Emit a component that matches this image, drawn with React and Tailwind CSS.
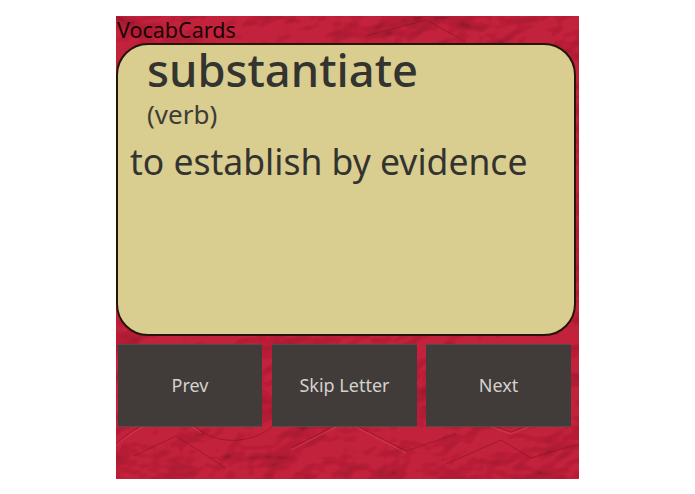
import React from "react";

const font = { fontFamily: '"Noto Sans", "Open Sans", sans-serif' };

function Paper() {
  return (
    <svg className="absolute inset-0 w-full h-full" viewBox="0 0 463 463" preserveAspectRatio="none" aria-hidden="true">
      <defs>
        <filter id="crumple" x="0" y="0" width="100%" height="100%">
          <feTurbulence type="fractalNoise" baseFrequency="0.013 0.018" numOctaves="4" seed="7" result="n" />
          <feDiffuseLighting in="n" surfaceScale="9" lightingColor="#ffffff" diffuseConstant="1.12" result="l">
            <feDistantLight azimuth="235" elevation="60" />
          </feDiffuseLighting>
          <feComposite in="l" in2="SourceGraphic" operator="arithmetic" k1="1" k2="0" k3="0" k4="0" />
        </filter>
      </defs>
      <rect width="463" height="463" fill="#c2203a" filter="url(#crumple)" />
      <g fill="none" stroke="#85121f" strokeWidth="1" opacity="0.55">
        <path d="M0 428 C30 400 60 395 85 415 C110 432 150 425 165 400" />
        <path d="M18 440 L60 420 L110 452" />
        <path d="M175 432 L230 404 L290 435 L340 418" />
        <path d="M330 448 L385 424 L415 442 L463 428" />
        <path d="M345 398 L395 416 L440 398" />
        <path d="M250 20 L310 4 L350 26" />
      </g>
      <g fill="none" stroke="#e0566a" strokeWidth="1" opacity="0.45">
        <path d="M0 430 C30 402 60 397 85 417" />
        <path d="M175 434 L230 406 L290 437" />
        <path d="M345 400 L395 418 L440 400" />
      </g>
    </svg>
  );
}

function Btn({ children, className }) {
  return (
    <button className={`h-[83px] bg-[#413c39] border-t border-t-[#524d4a] border-b border-b-[#524d4a] text-[#d4d2cf] text-[18px] flex items-center justify-center ${className}`}>
      {children}
    </button>
  );
}

export default function App() {
  return (
    <div className="w-[695px] h-[494px] bg-white overflow-hidden pt-4 pl-[116px]" style={font}>
      <div className="relative w-[463px] h-[463px] overflow-hidden">
        <Paper />
        <div className="relative flex flex-col">
          <div className="h-[27px] pl-px text-[21.5px] leading-[27px] text-[#1a0506] whitespace-nowrap">VocabCards</div>
          <div className="w-[460px] h-[293px] rounded-[32px] border-2 border-[#241509] bg-[#d9cd8f] text-[#33332f] flex flex-col">
            <div className="pl-[29px] text-[45.3px] leading-[50px] font-medium whitespace-nowrap">substantiate</div>
            <div className="pl-[29px] text-[26px] leading-[34px] mt-[2px] text-[#3d3c36]">(verb)</div>
            <div className="pl-3 text-[35.5px] leading-[46px] mt-[7px] whitespace-nowrap">to establish by evidence</div>
          </div>
          <div className="flex mt-[8px] ml-[2px] gap-[10px]">
            <Btn className="w-[144px]">Prev</Btn>
            <Btn className="w-[145px]">Skip Letter</Btn>
            <Btn className="w-[145px] ml-[-1px]">Next</Btn>
          </div>
        </div>
      </div>
    </div>
  );
}
